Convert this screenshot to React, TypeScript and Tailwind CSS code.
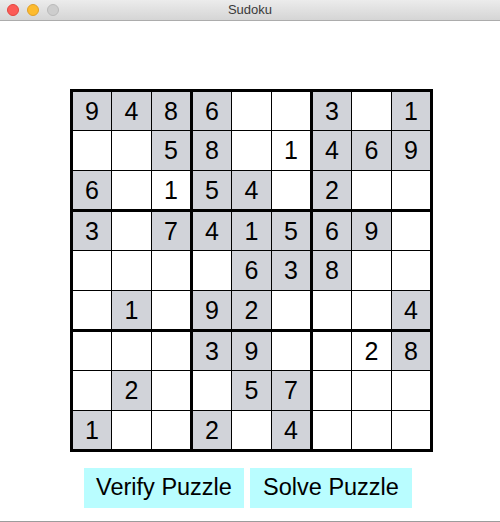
import React from "react";

// given digits (grey cells) and digits typed in by the user (white cells)
const givens = [
  "9486..3.1",
  "..58..469",
  "6..54.2..",
  "3.741569.",
  "....638..",
  ".1.92...4",
  "...39...8",
  ".2..57...",
  "1..2.4...",
];

const entered = [
  ".........",
  ".....1...",
  "..1......",
  ".........",
  ".........",
  ".........",
  ".......2.",
  ".........",
  ".........",
];

const Cell = ({ row, col }: { row: number; col: number }) => {
  const g = givens[row][col];
  const u = entered[row][col];
  const isGiven = g !== ".";
  const value = isGiven ? g : u !== "." ? u : "";
  return (
    <div
      className={
        "flex items-center justify-center text-[25px] text-black leading-none " +
        (isGiven ? "bg-[#d1d3d9]" : "bg-white")
      }
    >
      {value}
    </div>
  );
};

const Block = ({ br, bc }: { br: number; bc: number }) => {
  const cells = [];
  for (let r = 0; r < 3; r++) {
    for (let c = 0; c < 3; c++) {
      cells.push(<Cell key={`${r}-${c}`} row={br * 3 + r} col={bc * 3 + c} />);
    }
  }
  return (
    <div className="grid grid-cols-[38px_39px_38px] grid-rows-[38px_39px_38px] gap-[1px] bg-black">
      {cells}
    </div>
  );
};

const TitleBar = () => (
  <div className="relative h-[21px] flex items-center justify-center bg-gradient-to-b from-[#ececec] to-[#d5d5d5] border-b border-[#acacac]">
    <div className="absolute left-[7px] top-[4px] flex gap-[8px]">
      <span className="w-[12px] h-[12px] rounded-full bg-[#fc5b57] border border-[#e2463f]" />
      <span className="w-[12px] h-[12px] rounded-full bg-[#fdbb2e] border border-[#e0a028]" />
      <span className="w-[12px] h-[12px] rounded-full bg-[#cdcdcd] border border-[#bababa]" />
    </div>
    <div className="text-[13px] text-[#3a3a3a]">Sudoku</div>
  </div>
);

const App = () => {
  const blocks = [];
  for (let br = 0; br < 3; br++) {
    for (let bc = 0; bc < 3; bc++) {
      blocks.push(<Block key={`${br}-${bc}`} br={br} bc={bc} />);
    }
  }

  return (
    <div
      className="w-[500px] h-[522px] flex flex-col bg-white border-b border-[#9c9c9c]"
      style={{ fontFamily: '"Liberation Sans", Arial, sans-serif' }}
    >
      <TitleBar />
      <div className="flex-1 flex flex-col items-start pl-[70px] pt-[68px]">
        <div className="grid grid-cols-3 gap-[3px] p-[3px] bg-black">{blocks}</div>
        <div className="flex gap-[6px] mt-[16px] ml-[14px]">
          <button className="w-[160px] h-[40px] bg-[#b9fdff] text-[23.5px] text-black">
            Verify Puzzle
          </button>
          <button className="w-[162px] h-[40px] bg-[#b9fdff] text-[23.5px] text-black">
            Solve Puzzle
          </button>
        </div>
      </div>
    </div>
  );
};

export default App;
